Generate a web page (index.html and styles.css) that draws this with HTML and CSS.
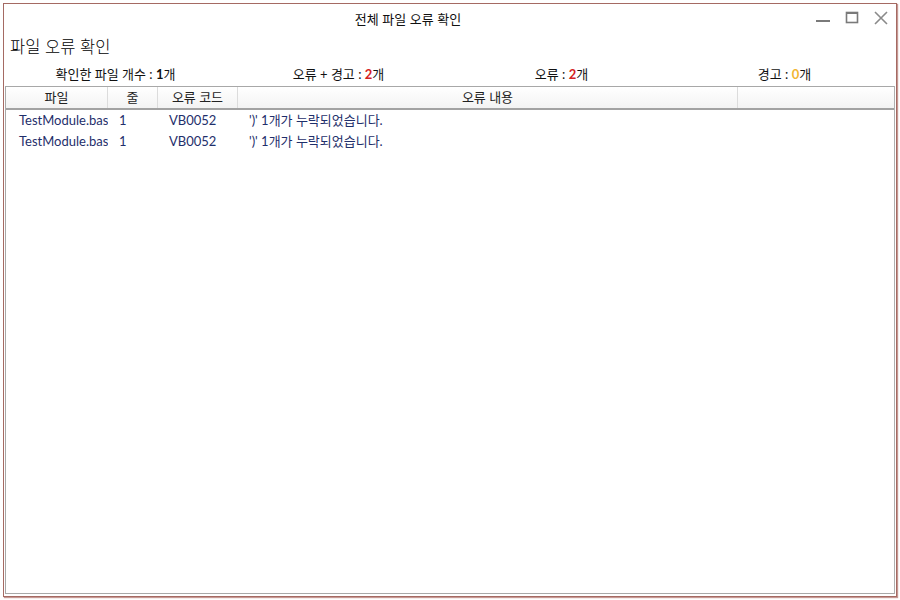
FILE: index.html
```html
<!DOCTYPE html>
<html lang="ko">
<head>
<meta charset="utf-8">
<title>전체 파일 오류 확인</title>
<link rel="stylesheet" href="styles.css">
</head>
<body>
<div class="desktop">
  <div class="window">
    <div class="titlebar">
      <div class="title">전체 파일 오류 확인</div>
      <div class="controls">
        <svg class="ctl" width="16" height="16" viewBox="0 0 16 16"><rect x="1" y="10" width="14" height="2" fill="#7a7a7a"/></svg>
        <svg class="ctl" width="16" height="16" viewBox="0 0 16 16"><rect x="2.5" y="2.5" width="11" height="10" fill="none" stroke="#7a7a7a" stroke-width="1.6"/><rect x="2" y="2" width="12" height="2" fill="#7a7a7a"/></svg>
        <svg class="ctl" width="16" height="16" viewBox="0 0 16 16"><path d="M2 2 L14 14 M14 2 L2 14" stroke="#8a8a8a" stroke-width="1.6" fill="none"/></svg>
      </div>
    </div>
    <div class="heading">파일 오류 확인</div>
    <div class="stats">
      <div class="stat">확인한 파일 개수 : <b class="num">1</b>개</div>
      <div class="stat">오류 + 경고 : <b class="num red">2</b>개</div>
      <div class="stat">오류 : <b class="num red">2</b>개</div>
      <div class="stat">경고 : <b class="num yellow">0</b>개</div>
    </div>
    <div class="grid">
      <div class="row head">
        <div class="cell c1">파일</div>
        <div class="cell c2">줄</div>
        <div class="cell c3">오류 코드</div>
        <div class="cell c4">오류 내용</div>
        <div class="cell c5"></div>
      </div>
      <div class="row">
        <div class="cell c1">TestModule.bas</div>
        <div class="cell c2">1</div>
        <div class="cell c3">VB0052</div>
        <div class="cell c4">')' 1개가 누락되었습니다.</div>
        <div class="cell c5"></div>
      </div>
      <div class="row">
        <div class="cell c1">TestModule.bas</div>
        <div class="cell c2">1</div>
        <div class="cell c3">VB0052</div>
        <div class="cell c4">')' 1개가 누락되었습니다.</div>
        <div class="cell c5"></div>
      </div>
    </div>
  </div>
</div>
</body>
</html>
```

FILE: styles.css
```css
* { box-sizing: border-box; }
html, body { margin: 0; padding: 0; }
body {
  width: 900px;
  height: 600px;
  overflow: hidden;
  background: #ffffff;
  font-family: Lato, "Noto Sans CJK KR", sans-serif;
  color: #111;
}
.desktop {
  width: 900px;
  height: 600px;
  padding: 3px 0 0 3px;
}
.window {
  width: 894px;
  height: 594px;
  border: 1px solid #a56a63;
  box-shadow: 1px 1px 1px rgba(150, 70, 60, 0.55);
  background: #fff;
  display: flex;
  flex-direction: column;
}
.titlebar {
  height: 32px;
  flex: none;
  display: flex;
  align-items: center;
  justify-content: center;
  padding-right: 84px;
  position: relative;
}
.title {
  font-family: "Noto Sans CJK KR", sans-serif;
  font-size: 13px;
  color: #111;
  margin-top: -3px;
}
.controls {
  position: absolute;
  right: 7px;
  top: 6px;
  display: flex;
  gap: 13px;
}
.ctl { display: block; }
.heading {
  height: 24px;
  line-height: 20px;
  padding-left: 6px;
  font-family: "Noto Sans CJK KR", sans-serif;
  font-weight: 300;
  font-size: 16.5px;
  color: #000;
}
.stats {
  height: 26px;
  padding-top: 3px;
  display: grid;
  grid-template-columns: repeat(4, 1fr);
  font-size: 13px;
  line-height: 23px;
}
.stat { text-align: center; color: #111; }
.num { font-weight: 700; color: #111; }
.num.red { color: #d42323; }
.num.yellow { color: #f2b632; }
.grid {
  flex: 1;
  margin: 0 1px 2px 1px;
  border: 1px solid #a8a8a8;
  border-right-color: #b0b0b0;
}
.row {
  display: flex;
  height: 21px;
  font-size: 13px;
  line-height: 20px;
  color: #1f2f6b;
}
.row.head {
  height: 23px;
  line-height: 21px;
  background: linear-gradient(#ffffff, #f3f3f3);
  border-bottom: 2px solid #a2a2a2;
  color: #222;
}
.cell {
  white-space: nowrap;
  overflow: hidden;
  padding-left: 11px;
}
.head .cell {
  padding-left: 0;
  text-align: center;
  border-right: 1px solid #dcdcdc;
}
.head .c5 { border-right: none; }
.c1 { width: 102px; padding-left: 13px; }
.c2 { width: 50px; }
.c3 { width: 80px; }
.c4 { width: 500px; }
.c5 { flex: 1; }
```
